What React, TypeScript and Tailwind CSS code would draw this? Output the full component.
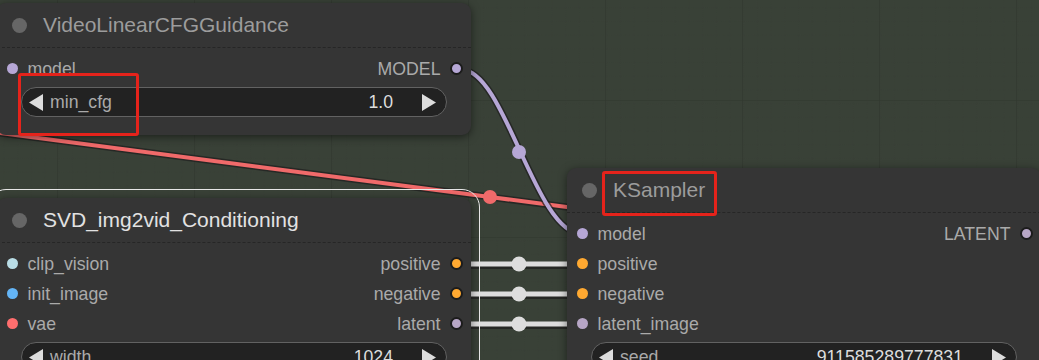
import React from 'react';

type Slot = { name: string; dot: string };

type NodeProps = {
  title: string;
  pos: string;
  selected?: boolean;
  titleColor: string;
  inputs: Slot[];
  outputs: Slot[];
  widget: { name: string; value: string };
  bottom?: boolean;
};

const MODEL = 'bg-[#b6a7d6]';
const LATENT = 'bg-[#b7a6c6]';
const COND = 'bg-[#ffa931]';

function Dot({ cls, className = '' }: { cls: string; className?: string }) {
  return <span className={`h-[13px] w-[13px] shrink-0 rounded-full border-2 border-[#1c1c1c] ${cls} ${className}`} />;
}

function Arrow({ dir }: { dir: 'l' | 'r' }) {
  return (
    <svg width="14" height="17" viewBox="0 0 14 17" className="shrink-0">
      {dir === 'l' ? <polygon points="14,0 14,17 0,8.5" fill="#dddddd" /> : <polygon points="0,0 0,17 14,8.5" fill="#dddddd" />}
    </svg>
  );
}

function GraphNode({ title, pos, selected, titleColor, inputs, outputs, widget, bottom }: NodeProps) {
  const rows = Math.max(inputs.length, outputs.length);
  return (
    <div className={`absolute w-[474px] rounded-[9px] bg-[#353535] shadow-[0_2px_8px_rgba(0,0,0,0.5)] ${pos}`}>
      {selected && <div className="pointer-events-none absolute -inset-[9px] rounded-[18px] border border-[#e6e6e6]" />}
      <div className="flex h-[45px] items-center border-b border-dashed border-[#262626] pl-[15px]">
        <span className="h-[15px] w-[15px] rounded-full bg-[#666666]" />
        <span className={`ml-[16px] text-[21px] ${titleColor}`}>{title}</span>
      </div>
      <div className="pt-[6px] text-[17.7px] text-[#aaaaaa]">
        {Array.from({ length: rows }).map((_, i) => (
          <div key={i} className="flex h-[30px] items-center justify-between">
            <div className="flex items-center">
              {inputs[i] && (
                <>
                  <span className={`ml-[9.5px] h-[11px] w-[11px] shrink-0 rounded-full ${inputs[i].dot}`} />
                  <span className="ml-[10px]">{inputs[i].name}</span>
                </>
              )}
            </div>
            <div className="flex items-center">
              {outputs[i] && (
                <>
                  <span>{outputs[i].name}</span>
                  <Dot cls={outputs[i].dot} className="ml-[9px] mr-[8.5px]" />
                </>
              )}
            </div>
          </div>
        ))}
        <div className={`mx-[24px] mt-[3px] flex h-[30px] items-center rounded-full border border-[#626262] bg-[#222222] pl-[7px] pr-[10px] ${bottom ? 'mb-[18px]' : 'mb-[20px]'}`}>
          <Arrow dir="l" />
          <span className="ml-[7px] text-[#aaaaaa]">{widget.name}</span>
          <span className="ml-auto mr-[29px] text-[#dddddd]">{widget.value}</span>
          <Arrow dir="r" />
        </div>
      </div>
    </div>
  );
}

function Links() {
  return (
    <svg className="absolute inset-0" width="1039" height="360">
      <defs>
        <pattern id="minor" width="13.7" height="13.7" patternUnits="userSpaceOnUse" x="57" y="100">
          <path d="M13.7 0V13.7M0 13.7H13.7" stroke="#343b32" strokeWidth="0.7" strokeDasharray="1 1" fill="none" />
        </pattern>
        <pattern id="major" width="137" height="137" patternUnits="userSpaceOnUse" x="57" y="100">
          <rect width="137" height="137" fill="url(#minor)" />
          <path d="M0 0V137M0 0H137" stroke="#30372e" strokeWidth="1.2" fill="none" />
        </pattern>
      </defs>
      <rect width="1039" height="360" fill="url(#major)" />

      {/* vae link through reroute */}
      <path d="M-20 130.4 L490 197 L620 214" stroke="#1e1e1e" strokeOpacity="0.7" strokeWidth="7" fill="none" />
      <path d="M-20 130.4 L490 197 L620 214" stroke="#f06a6a" strokeWidth="4" fill="none" />
      <circle cx="490" cy="197" r="7" fill="#f06a6a" />

      {/* model link */}
      <path d="M462 70 C505 70, 535 234, 582 234" stroke="#1e1e1e" strokeOpacity="0.7" strokeWidth="7" fill="none" />
      <path d="M462 70 C505 70, 535 234, 582 234" stroke="#b6a7d6" strokeWidth="4" fill="none" />
      <circle cx="519" cy="152" r="7" fill="#b6a7d6" />

      {[264, 294, 324].map((y) => (
        <g key={y}>
          <path d={`M462 ${y + 1.5} H580`} stroke="#1e1e1e" strokeOpacity="0.7" strokeWidth="7" />
          <path d={`M462 ${y} H580`} stroke="#dddddd" strokeWidth="5" />
          <circle cx="519" cy={y} r="7.5" fill="#dddddd" />
        </g>
      ))}
    </svg>
  );
}

export default function App() {
  return (
    <div className="relative h-[360px] w-[1039px] overflow-hidden bg-[#394137] font-['Liberation_Sans',Arial,sans-serif]">
      <Links />
      <GraphNode
        title="VideoLinearCFGGuidance"
        pos="left-[-3px] top-[3px]"
        titleColor="text-[#9c9c9c]"
        inputs={[{ name: 'model', dot: MODEL }]}
        outputs={[{ name: 'MODEL', dot: MODEL }]}
        widget={{ name: 'min_cfg', value: '1.0' }}
        bottom
      />
      <GraphNode
        title="SVD_img2vid_Conditioning"
        pos="left-[-3px] top-[198px]"
        selected
        titleColor="text-[#e2e2e2]"
        inputs={[
          { name: 'clip_vision', dot: 'bg-[#b9dde6]' },
          { name: 'init_image', dot: 'bg-[#64b5f6]' },
          { name: 'vae', dot: 'bg-[#ff6e6e]' },
        ]}
        outputs={[
          { name: 'positive', dot: COND },
          { name: 'negative', dot: COND },
          { name: 'latent', dot: LATENT },
        ]}
        widget={{ name: 'width', value: '1024' }}
      />
      <GraphNode
        title="KSampler"
        pos="left-[567px] top-[168px]"
        titleColor="text-[#9c9c9c]"
        inputs={[
          { name: 'model', dot: MODEL },
          { name: 'positive', dot: COND },
          { name: 'negative', dot: COND },
          { name: 'latent_image', dot: LATENT },
        ]}
        outputs={[{ name: 'LATENT', dot: LATENT }]}
        widget={{ name: 'seed', value: '911585289777831' }}
      />
      <div className="absolute left-[18px] top-[73px] h-[63px] w-[121px] rounded-[3px] border-[3px] border-[#e5231b]" />
      <div className="absolute left-[602px] top-[171px] h-[45px] w-[115px] rounded-[3px] border-[3px] border-[#e5231b]" />
    </div>
  );
}
